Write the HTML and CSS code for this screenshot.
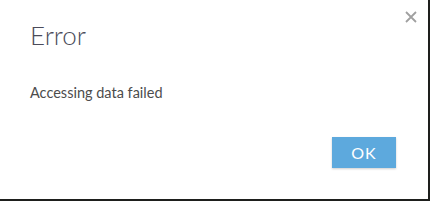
FILE: index.html
```html
<!DOCTYPE html>
<html lang="en">
<head>
  <meta charset="UTF-8">
  <title>Error</title>
  <link rel="stylesheet" href="styles.css">
</head>
<body>
  <div class="dialog">
    <a href="javascript:;" class="close" aria-label="Close">
      <svg width="12" height="12" viewBox="0 0 12 12">
        <path d="M1 1 L11 11 M11 1 L1 11" stroke="#a0a0a0" stroke-width="1.8" fill="none"/>
      </svg>
    </a>
    <h2 class="title">Error</h2>
    <p class="message">Accessing data failed</p>
    <div class="actions">
      <button class="btn">OK</button>
    </div>
  </div>
</body>
</html>
```

FILE: styles.css
```css
html, body {
  margin: 0;
  padding: 0;
  background-color: #1e1f1d;
}

.dialog {
  position: relative;
  box-sizing: border-box;
  width: 428px;
  height: 199px;
  padding: 19px 32px 0 30px;
  background-color: #fff;
  font-family: Lato, "Open Sans", sans-serif;
  color: #4c4c4c;
}

.close {
  position: absolute;
  top: 11px;
  right: 11px;
  display: block;
  width: 12px;
  height: 12px;
}

.close svg {
  display: block;
}

.title {
  margin: 0;
  font-size: 26px;
  font-weight: 300;
  line-height: 32px;
  color: #4b4b5a;
}

.message {
  margin: 33px 0 0;
  font-size: 14.5px;
  line-height: 18px;
}

.actions {
  display: flex;
  justify-content: flex-end;
  margin-top: 35px;
}

.btn {
  width: 64px;
  height: 31px;
  border: 0;
  padding: 0;
  background-color: #5da9dd;
  box-shadow: 0 1px 2px rgba(0, 0, 0, 0.2);
  color: #fff;
  font-family: Lato, "Open Sans", sans-serif;
  font-size: 16px;
  letter-spacing: 1px;
}
```
